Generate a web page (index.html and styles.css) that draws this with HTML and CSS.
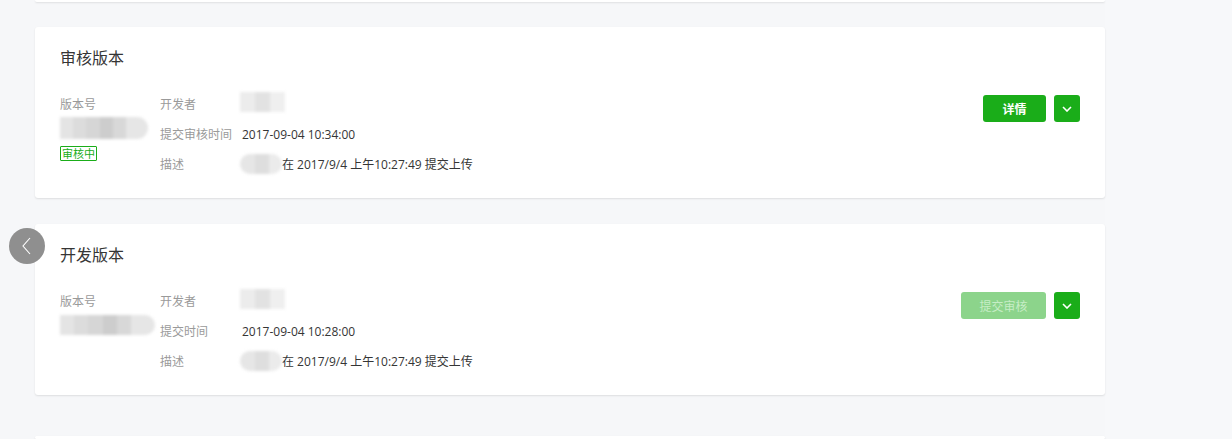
FILE: index.html
```html
<!DOCTYPE html>
<html lang="zh-CN">
<head>
<meta charset="utf-8">
<title>版本管理</title>
<link rel="stylesheet" href="styles.css">
</head>
<body>
<div class="page">
  <div class="card card-prev"></div>

  <section class="card">
    <h2 class="card-title">审核版本</h2>
    <div class="card-body">
      <div class="col-version">
        <div class="label">版本号</div>
        <div class="blur blur-version"></div>
        <span class="badge">审核中</span>
      </div>
      <div class="info">
        <div class="row"><span class="label key">开发者</span><span class="blur blur-dev"></span></div>
        <div class="row"><span class="label key">提交审核时间</span><span class="value">2017-09-04 10:34:00</span></div>
        <div class="row"><span class="label key">描述</span><span class="blur blur-desc"></span><span class="value">在 2017/9/4 上午10:27:49 提交上传</span></div>
      </div>
      <div class="actions">
        <button class="btn btn-main">详情</button>
        <button class="btn btn-drop"><svg width="10" height="6" viewBox="0 0 10 6"><path d="M1 1l4 4 4-4" fill="none" stroke="#fff" stroke-width="1.6"/></svg></button>
      </div>
    </div>
  </section>

  <section class="card">
    <h2 class="card-title">开发版本</h2>
    <div class="card-body">
      <div class="col-version">
        <div class="label">版本号</div>
        <div class="blur blur-version blur-version2"></div>
      </div>
      <div class="info">
        <div class="row"><span class="label key">开发者</span><span class="blur blur-dev"></span></div>
        <div class="row"><span class="label key">提交时间</span><span class="value">2017-09-04 10:28:00</span></div>
        <div class="row"><span class="label key">描述</span><span class="blur blur-desc"></span><span class="value">在 2017/9/4 上午10:27:49 提交上传</span></div>
      </div>
      <div class="actions">
        <button class="btn btn-main btn-disabled">提交审核</button>
        <button class="btn btn-drop"><svg width="10" height="6" viewBox="0 0 10 6"><path d="M1 1l4 4 4-4" fill="none" stroke="#fff" stroke-width="1.6"/></svg></button>
      </div>
    </div>
  </section>

  <div class="card card-next"></div>
</div>

<a class="back" href="#"><svg width="14" height="20" viewBox="0 0 14 20"><path d="M10 2L3 10l7 8" fill="none" stroke="#fff" stroke-width="1.1"/></svg></a>
</body>
</html>
```
FILE: styles.css
```css
* { box-sizing: border-box; }
html, body { margin: 0; padding: 0; }
body {
  background: #f7f8fa;
  font-family: "Noto Sans CJK SC", "Liberation Sans", sans-serif;
  color: #353535;
  height: 439px;
  overflow: hidden;
}
.page {
  width: 1105px;
  padding-left: 35px;
  background: #f6f7f9;
  height: 439px;
}
.card {
  background: #fff;
  border-radius: 3px;
  box-shadow: 0 1px 2px rgba(0, 0, 0, 0.1);
  padding: 18px 25px 19px 25px;
  margin-bottom: 26px;
  height: 171px;
}
.card-prev {
  height: 2px;
  padding: 0;
  margin-top: 0;
  margin-bottom: 25px;
  border-radius: 0 0 3px 3px;
}
.card-next {
  margin-top: 41px;
  height: 3px;
  padding: 0;
}
.card-title {
  margin: 0;
  font-size: 16px;
  font-weight: normal;
  line-height: 24px;
  color: #353535;
}
.card-body {
  display: flex;
  margin-top: 20px;
}
.col-version {
  width: 100px;
  flex: none;
}
.label {
  font-size: 12px;
  color: #9a9a9a;
  line-height: 30px;
}
.col-version .label { line-height: 30px; margin-bottom: -2px; }
.info { flex: 1; }
.row {
  display: flex;
  align-items: center;
  height: 30px;
}
.key { width: 82px; flex: none; }
.value {
  font-family: "Open Sans", "Noto Sans CJK SC", sans-serif;
  font-size: 12px;
  color: #353535;
}
.blur {
  display: block;
  filter: blur(1.5px);
}
.blur-version {
  width: 88px;
  height: 22px;
  border-radius: 0 11px 11px 0;
  background: linear-gradient(90deg, #e4e4e4 0 15%, #dcdcdc 15% 30%, #d6d6d6 30% 45%, #cdcdcd 45% 60%, #d8d8d8 60% 75%, #e6e6e6 75% 100%);
}
.blur-version2 { width: 95px; height: 20px; margin-top: 1px; }
.blur-dev {
  width: 45px;
  height: 20px;
  margin-top: -5px;
  margin-left: -2px;
  background: linear-gradient(90deg, #ececec 0 33%, #e2e2e2 33% 66%, #efefef 66% 100%);
}
.blur-desc {
  width: 42px;
  height: 20px;
  margin-left: -2px;
  border-radius: 10px;
  background: linear-gradient(90deg, #e6e6e6 0 35%, #dedede 35% 70%, #ebebeb 70% 100%);
}
.badge {
  display: inline-block;
  margin-top: 6px;
  border: 1px solid #1aad19;
  color: #1aad19;
  font-size: 11px;
  line-height: 13px;
  padding: 0 1px;
  border-radius: 1px;
}
.actions {
  display: flex;
  gap: 8px;
  margin-top: 6px;
  align-items: flex-start;
}
.btn {
  border: 0;
  height: 27px;
  border-radius: 3px;
  background: #1aad19;
  color: #fff;
  font-family: inherit;
  font-size: 12px;
  font-weight: bold;
  padding: 0;
  cursor: pointer;
  display: flex;
  align-items: center;
  justify-content: center;
}
.btn-main { width: 63px; }
.btn-drop { width: 26px; }
.btn-disabled {
  width: 85px;
  background: #8cd48b;
  color: #c6edc6;
  font-weight: normal;
}
.back {
  position: absolute;
  left: 9px;
  top: 228px;
  width: 36px;
  height: 36px;
  border-radius: 50%;
  background: #8f8f8f;
  display: flex;
  align-items: center;
  justify-content: center;
}
```
